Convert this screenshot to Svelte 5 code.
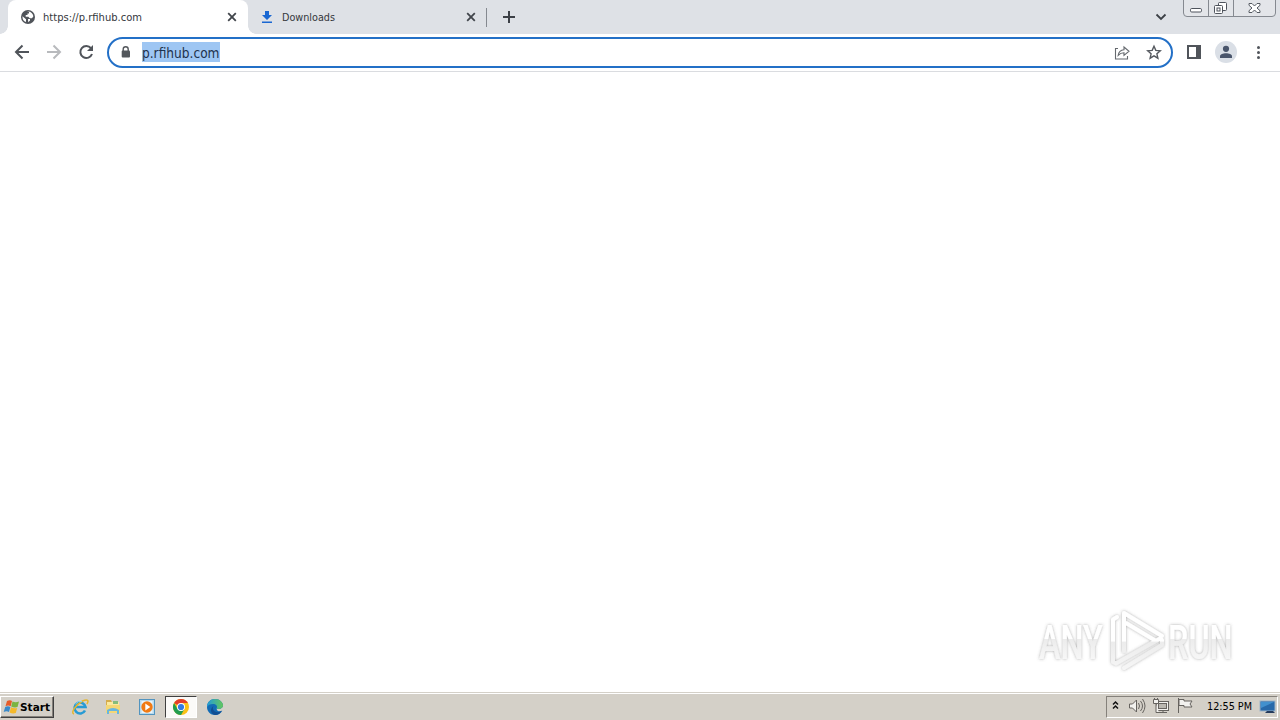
<script>
  const title = 'https://p.rfihub.com';
  const address = 'p.rfihub.com';
</script>

<div class="screen">
  <header class="tabs">
    <div class="tab active">
      <svg class="fav" width="16" height="16" viewBox="0 0 16 16"><circle cx="8" cy="8" r="7" fill="#50545a"/><path d="M2.500 7.200 6 10.200v2.900C3.600 12.200 2.200 10 2.500 7.200ZM7 2.600c3.200-.7 6 1.600 6.400 4.700L12 9.300H9.700L8.300 7.700H5.700V6h1.800V4.400H9V3ZM8 10h2v1.500L8.200 13.300Z" fill="#fff"/></svg>
      <svg class="label" width="105" height="18"><text x="0" y="13" textLength="99" lengthAdjust="spacingAndGlyphs">{title}</text></svg>
      <svg class="close" width="12" height="12" viewBox="0 0 12 12"><path d="m2.200 2.200 7.600 7.600m0-7.600L2.200 9.800"/></svg>
    </div>
    <div class="tab second">
      <svg class="fav" width="16" height="16" viewBox="0 0 16 16"><path d="M6 2h4v4h3L8 11 3 6h3ZM3 12.400h10V14H3Z" fill="#1967d2"/></svg>
      <svg class="label" width="105" height="18"><text x="0" y="13" textLength="53" lengthAdjust="spacingAndGlyphs">Downloads</text></svg>
      <svg class="close" width="12" height="12" viewBox="0 0 12 12"><path d="m2.200 2.200 7.600 7.600m0-7.600L2.200 9.800"/></svg>
    </div>
    <svg class="plus" width="14" height="14" viewBox="0 0 14 14"><path d="M7 1v12M1 7h12"/></svg>
    <svg class="chev" width="12" height="8" viewBox="0 0 12 8"><path d="m1.500 1.500 4.500 4.500 4.500-4.500"/></svg>
    <svg class="winbuttons" width="94" height="18" viewBox="0 0 94 18"><path d="M.5 0v13q0 3.500 3.500 3.500H89q3.500 0 3.500-3.500V0M25.500 0v16M50.500 0v16" fill="#e3e5e9" stroke="#858990"/><g fill="#fff" stroke="#4e535c"><rect x="7.500" y="8.500" width="11" height="3.500" rx="1.200"/><rect x="35.500" y="2.500" width="8" height="8" rx="1"/><rect x="31.500" y="5.500" width="8" height="8" rx="1"/><rect x="34" y="8" width="3" height="3"/></g><path d="M66 3.500h3l2.500 2.500L74 3.500h3v1.800L74 8l3 2.700v1.800h-3L71.500 10 69 12.500h-3v-1.800L69 8l-3-2.700Z" fill="#fff" stroke="#555a62"/></svg>
  </header>

  <nav class="toolbar">
    <svg class="nav" width="107" height="36" viewBox="0 0 107 36" fill="none" stroke-width="2"><path d="M29 18H16m6.500-6.500L16 18l6.500 6.500" stroke="#50545a"/><path d="M47 18h13m-6.500-6.500L60 18l-6.500 6.500" stroke="#b8babd"/><path d="M91 14.200A6 6 0 1 0 92 20" stroke="#50545a"/><path d="M93 11v6h-6Z" fill="#50545a"/></svg>
    <div class="omnibox">
      <svg class="lock" width="12" height="14" viewBox="0 0 12 14"><path d="M3.200 5V3.200a2.500 2.500 0 0 1 5 0V5" fill="none" stroke="#53575c" stroke-width="1.400"/><rect x="1.700" y="4.500" width="8.300" height="7" rx="1" fill="#53575c"/></svg>
      <div class="selection"><svg width="78" height="20"><text x="0" y="15.500" textLength="77.500" lengthAdjust="spacingAndGlyphs">{address}</text></svg></div>
      <svg class="share" width="16" height="16" viewBox="0 0 16 16" fill="none" stroke="#65696e" stroke-width="1.100"><path d="M4 3.500H1.500v10.500h12v-3M4.200 10.300c.5-3.700 2.300-5.300 5.800-5.500V2L15 6.300 10 10.400V7.700C7.500 7.700 5.800 8.500 4.200 10.300Z"/></svg>
      <svg class="star" width="16" height="16" viewBox="0 0 16 16"><path d="m8 1.300 1.800 4.100 4.500.4-3.400 3 1 4.400L8 10.900l-3.900 2.300 1-4.400-3.400-3 4.500-.4Z" fill="none" stroke="#54585e" stroke-width="1.400"/></svg>
    </div>
    <svg class="tools" width="107" height="36" viewBox="0 0 107 36"><path d="M14 11h14v14H14Zm2 2v10h7V13Z" fill="#50545a" fill-rule="evenodd"/><circle cx="53" cy="18" r="11" fill="#dadfe6"/><circle cx="53" cy="14.800" r="3.100" fill="#49556b"/><path d="M47 24v-1.700c0-4 12-4 12 0V24Z" fill="#49556b"/><g fill="#50545a"><circle cx="85.500" cy="13.500" r="1.500"/><circle cx="85.500" cy="18.500" r="1.500"/><circle cx="85.500" cy="23.500" r="1.500"/></g></svg>
  </nav>

  <main>
    <svg class="watermark" width="216" height="82" viewBox="0 0 216 82">
      <defs>
        <filter id="shadow" x="-10%" y="-20%" width="120%" height="140%"><feDropShadow dx="0" dy="0" stdDeviation="1.800" flood-color="#555" flood-opacity=".5"/></filter>
        <linearGradient id="shade" gradientUnits="userSpaceOnUse" x1="0" x2="0" y1="10" y2="72"><stop offset="0" stop-color="#fff"/><stop offset=".5" stop-color="#fff"/><stop offset=".52" stop-color="#ececec"/><stop offset="1" stop-color="#f7f7f7"/></linearGradient>
        <linearGradient id="letters" gradientUnits="userSpaceOnUse" x1="0" x2="0" y1="-28" y2="0"><stop offset="0" stop-color="#fff"/><stop offset=".49" stop-color="#fff"/><stop offset=".51" stop-color="#ececec"/><stop offset="1" stop-color="#f7f7f7"/></linearGradient>
      </defs>
      <g filter="url(#shadow)" fill="url(#letters)">
        <text transform="translate(8 59) scale(.76 1.430)" textLength="84" lengthAdjust="spacingAndGlyphs">ANY</text>
        <text transform="translate(137 59) scale(.76 1.430)" textLength="85" lengthAdjust="spacingAndGlyphs">RUN</text>
        <g fill="none" stroke="url(#shade)" stroke-width="4" stroke-linejoin="round" stroke-linecap="round"><path d="M93 51V13l38 23M95 23l30 18M86 17l-4 2.500V62l3 1.500L130 38M93 68l38-23v-5"/></g>
      </g>
    </svg>
  </main>

  <footer>
    <div class="start">
      <svg width="17" height="16" viewBox="0 0 17 16"><path d="M4 2q3-1.600 5 0L7.700 7.300q-2.500-1.500-5.200 0Z" fill="#e65b28"/><path d="M9.500 2.500q3 1.500 6.500 0L14.500 8Q11.500 9 8.200 7.500Z" fill="#7bb441"/><path d="M2.200 8q2.700-1.500 5.200 0L6 13Q3.500 11.500.7 13Z" fill="#3989c9"/><path d="M8 8.300q3.400 1.500 6.200.7l-1.400 5q-3 1.200-6.200-.5Z" fill="#f4b92b"/></svg>
      <svg class="startlabel" width="31" height="16"><text x="0" y="12" textLength="30" lengthAdjust="spacingAndGlyphs">Start</text></svg>
    </div>
    <svg class="ie" width="18" height="18" viewBox="0 0 18 18"><path d="M14 12.500A5.500 5.500 0 1 1 14.500 9H5" fill="none" stroke="#279bd4" stroke-width="2.600"/><path d="M3 16C-.8 15 4.500 7 11.500 3c6-2.600 6.300.2 4.400 3" fill="none" stroke="#e5b62d" stroke-width="1.500"/><path d="M4.500 6Q7 2.500 11 3.500" stroke="#84d5f2" stroke-width="1" fill="none"/></svg>
    <svg class="folder" width="16" height="18" viewBox="0 0 16 18"><path d="M1 4V2h5l1 2h7v10H1Z" fill="#d5ac4c"/><path d="M2 4h12v9H2Z" fill="#fbe99e"/><path d="M8 3h5v3H8Z" fill="#86bc7b"/><path d="M1 7h14v8H1Z" fill="#f4d775"/><path d="M2 16v-4q6-4 12 0v4h-2v-3H4v3Z" fill="#68b6df"/></svg>
    <svg class="player" width="17" height="17" viewBox="0 0 17 17"><rect x=".5" y=".5" width="15" height="15" fill="#b8daed" stroke="#5294bf"/><rect x="2.500" y="2" width="11" height="12" fill="#e8f4fb"/><circle cx="8" cy="8" r="5.700" fill="#f17a13"/><path d="m6.300 4.500 5 3.500-5 3.500Z" fill="#fff"/></svg>
    <div class="chrome-button">
      <svg width="18" height="18" viewBox="0 0 18 18"><circle cx="9" cy="9" r="8" fill="#fbc116"/><path d="M9 9 2.070 5A8 8 0 0 1 15.930 5H9Z" fill="#e43e2b"/><path d="M2.070 5A8 8 0 0 0 9 17l3.500-6H5.500Z" fill="#229d50"/><circle cx="9" cy="9" r="4" fill="#fff"/><circle cx="9" cy="9" r="3.100" fill="#347be4"/></svg>
    </div>
    <svg class="edge" width="18" height="18" viewBox="0 0 18 18"><defs><linearGradient id="edge" x1="0" x2="1"><stop stop-color="#229bd8"/><stop offset="1" stop-color="#65c85b"/></linearGradient></defs><path d="M1 9C1 4 4.500 1 9 1c5 0 8 3.500 8 6.600 0 3.300-4.600 4-6.400 2.800 0 3 3.400 3.500 5.700 2.300C15 15.500 12 17 9 17 4.500 17 1 13.500 1 9Z" fill="#126bb5"/><path d="M1 9C1 4 4.500 1 9 1c5 0 8 3.500 8 6.600 0 3.300-4.600 4-6.400 2.800C12 8 9.800 6 7 6c-3 0-5 1-6 3Z" fill="url(#edge)"/><path d="M7.500 8c-2 3 1 7 5.500 6l3-1.500Q13 17 9.500 17C5 16.800 3 11 7.500 8Z" fill="#124e92"/></svg>
    <div class="tray">
      <svg class="trayicons" width="92" height="20" viewBox="0 0 92 20"><path d="m6 7.500 2.500-2.500L11 7.500m-5 4L8.500 9l2.500 2.500" fill="none" stroke="#111" stroke-width="1.500"/><g fill="#f2f1ee" stroke="#66635f"><path d="M22.500 7h3l4-4v12l-4-4h-3Z"/><path d="M31.500 6q2 3 0 6m2-8q4 5 0 10m2-12q5 7 0 14" fill="none"/><rect x="49.500" y="4.500" width="12" height="9"/><rect x="51.500" y="6.500" width="8" height="5" fill="#bbb8b1"/><path d="M52 15.500h8M56 13.500v2M46.500 2.500h5v4h-5Zm1 0V1m3 1.500V1M49 6.500v9h3"/><path d="M71.500 1v15M72 2.500h5v1.500h8l-2 3 2 3h-8V8.500h-5Z"/></g></svg>
      <svg class="clock" width="48" height="18"><text x="0" y="12" textLength="45" lengthAdjust="spacingAndGlyphs">12:55 PM</text></svg>
      <svg class="desktop" width="17" height="16" viewBox="0 0 17 16"><rect x="1" y="2" width="15" height="10" fill="#2869aa" stroke="#9db3c7"/><path d="M2 3h13L2 9Z" fill="#4290ce"/><path d="M8 12h6l2 2H6Z" fill="#253b5d"/></svg>
    </div>
  </footer>
</div>

<style>
  :global(body) { margin: 0; overflow: hidden; }
  * { box-sizing: border-box; }
  svg { display: block; flex-shrink: 0; overflow: visible; }
  .screen { width: 1280px; height: 720px; display: flex; flex-direction: column; background: #fff; font-family: "DejaVu Sans Condensed", "DejaVu Sans", sans-serif; }
  .tabs { height: 34px; display: flex; background: #dee1e6; padding-left: 8px; }
  .tab { width: 240px; height: 34px; display: flex; position: relative; padding: 9px 10px 0 12px; }
  .active { background: #fff; border-radius: 8px 8px 0 0; }
  .active::before, .active::after { content: ''; position: absolute; bottom: 0; width: 8px; height: 8px; }
  .active::before { left: -8px; background: radial-gradient(circle at 0 0, transparent 7.5px, #fff 8px); }
  .active::after { right: -8px; background: radial-gradient(circle at 100% 0, transparent 7.5px, #fff 8px); }
  .second { width: 239px; padding-left: 11px; }
  .second::after { content: ''; position: absolute; right: 0; top: 8px; width: 1px; height: 19px; background: #858990; }
  .label { margin-left: 7px; margin-top: -1px; font-size: 11px; fill: #34373c; }
  .close { margin-top: 2px; margin-left: auto; fill: none; stroke: #41454b; stroke-width: 1.8; }
  .plus { margin: 10px 0 0 15px; fill: none; stroke: #3c4046; stroke-width: 2; }
  .chev { margin: 13px 16px 0 auto; fill: none; stroke: #3c4046; stroke-width: 1.8; }
  .winbuttons { margin-right: 3px; }
  .toolbar { height: 38px; display: flex; border-bottom: 1px solid #dadce0; }
  .omnibox { width: 1066px; height: 31px; margin-top: 3px; border: 2px solid #2370c7; border-radius: 16px; display: flex; align-items: center; padding: 0 9px 0 11px; }
  .selection { width: 78px; height: 20px; background: #9ec6f3; margin-left: 10px; margin-top: -1px; font-size: 14px; }
  .selection svg { margin-left: -.5px; }
  .selection text { fill: #1e324c; }
  .share { margin-left: auto; margin-right: 16px; }
  main { height: 620px; display: flex; align-items: flex-end; justify-content: flex-end; padding: 0 33px 10px 0; }
  .watermark { font-family: Roboto, sans-serif; font-size: 34px; font-weight: 500; }
  footer { height: 28px; display: flex; background: #d4d0c8; border-top: 1px solid #d4d0c8; box-shadow: inset 0 1px #fff; align-items: center; }
  .start { width: 54px; height: 22px; display: flex; align-items: center; border: 1px solid; border-color: #fff #404040 #404040 #fff; box-shadow: inset -1px -1px #85817b; padding-left: 2px; }
  .startlabel { font-size: 11px; font-weight: bold; }
  .ie { margin-left: 17px; }
  .folder { margin-left: 16px; }
  .player { margin-left: 18px; margin-top: 1px; }
  .chrome-button { display: flex; align-items: center; justify-content: center; width: 32px; height: 22px; margin-left: 9px; border: 1px solid; border-color: #404040 #fff #fff #404040; background: #fbfaf8; }
  .edge { margin-left: 9px; }
  .tray { margin: 0 2px 0 auto; width: 172px; height: 22px; display: flex; align-items: center; border: 1px solid; border-color: #85817b #fff #fff #85817b; }
  .clock { margin-left: 8px; font-size: 11px; }
  .desktop { margin-left: 4px; }
</style>
